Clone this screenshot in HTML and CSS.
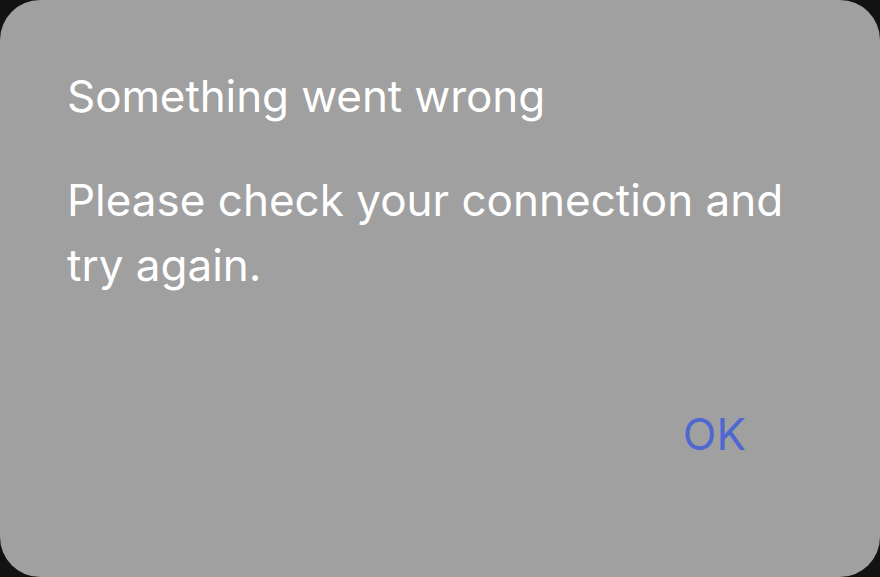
FILE: index.html
```html
<!DOCTYPE html>
<html lang="en">
<head>
    <meta charset="UTF-8">
    <meta name="viewport" content="width=device-width, initial-scale=1.0">
    <title>Error</title>
    <link rel="stylesheet" href="styles.css">
</head>
<body>
    <div class="dialog">
        <h1 class="dialog-title">Something went wrong</h1>
        <p class="dialog-message">Please check your connection and try again.</p>
        <div class="dialog-actions">
            <button class="dialog-button">OK</button>
        </div>
    </div>
</body>
</html>
```

FILE: styles.css
```css
html, body {
    margin: 0;
    height: 100%;
    background-color: #121212;
}
body {
    font-family: Inter, "Noto Sans", sans-serif;
}
.dialog {
    box-sizing: border-box;
    height: 577px;
    background-color: #a0a0a0;
    border-radius: 40px;
    padding: 70px 67px 0;
    display: flex;
    flex-direction: column;
    color: #fff;
}
.dialog-title {
    margin: 0;
    font-size: 44px;
    font-weight: 400;
    line-height: 53px;
    letter-spacing: -0.1px;
}
.dialog-message {
    margin: 45px 0 0;
    font-size: 44px;
    line-height: 65px;
}
.dialog-actions {
    display: flex;
    justify-content: flex-end;
    margin-top: 110px;
    padding-right: 67px;
}
.dialog-button {
    background: none;
    border: none;
    padding: 0;
    font-family: inherit;
    font-size: 44px;
    line-height: 53px;
    color: #4f68d0;
    cursor: pointer;
}
```
